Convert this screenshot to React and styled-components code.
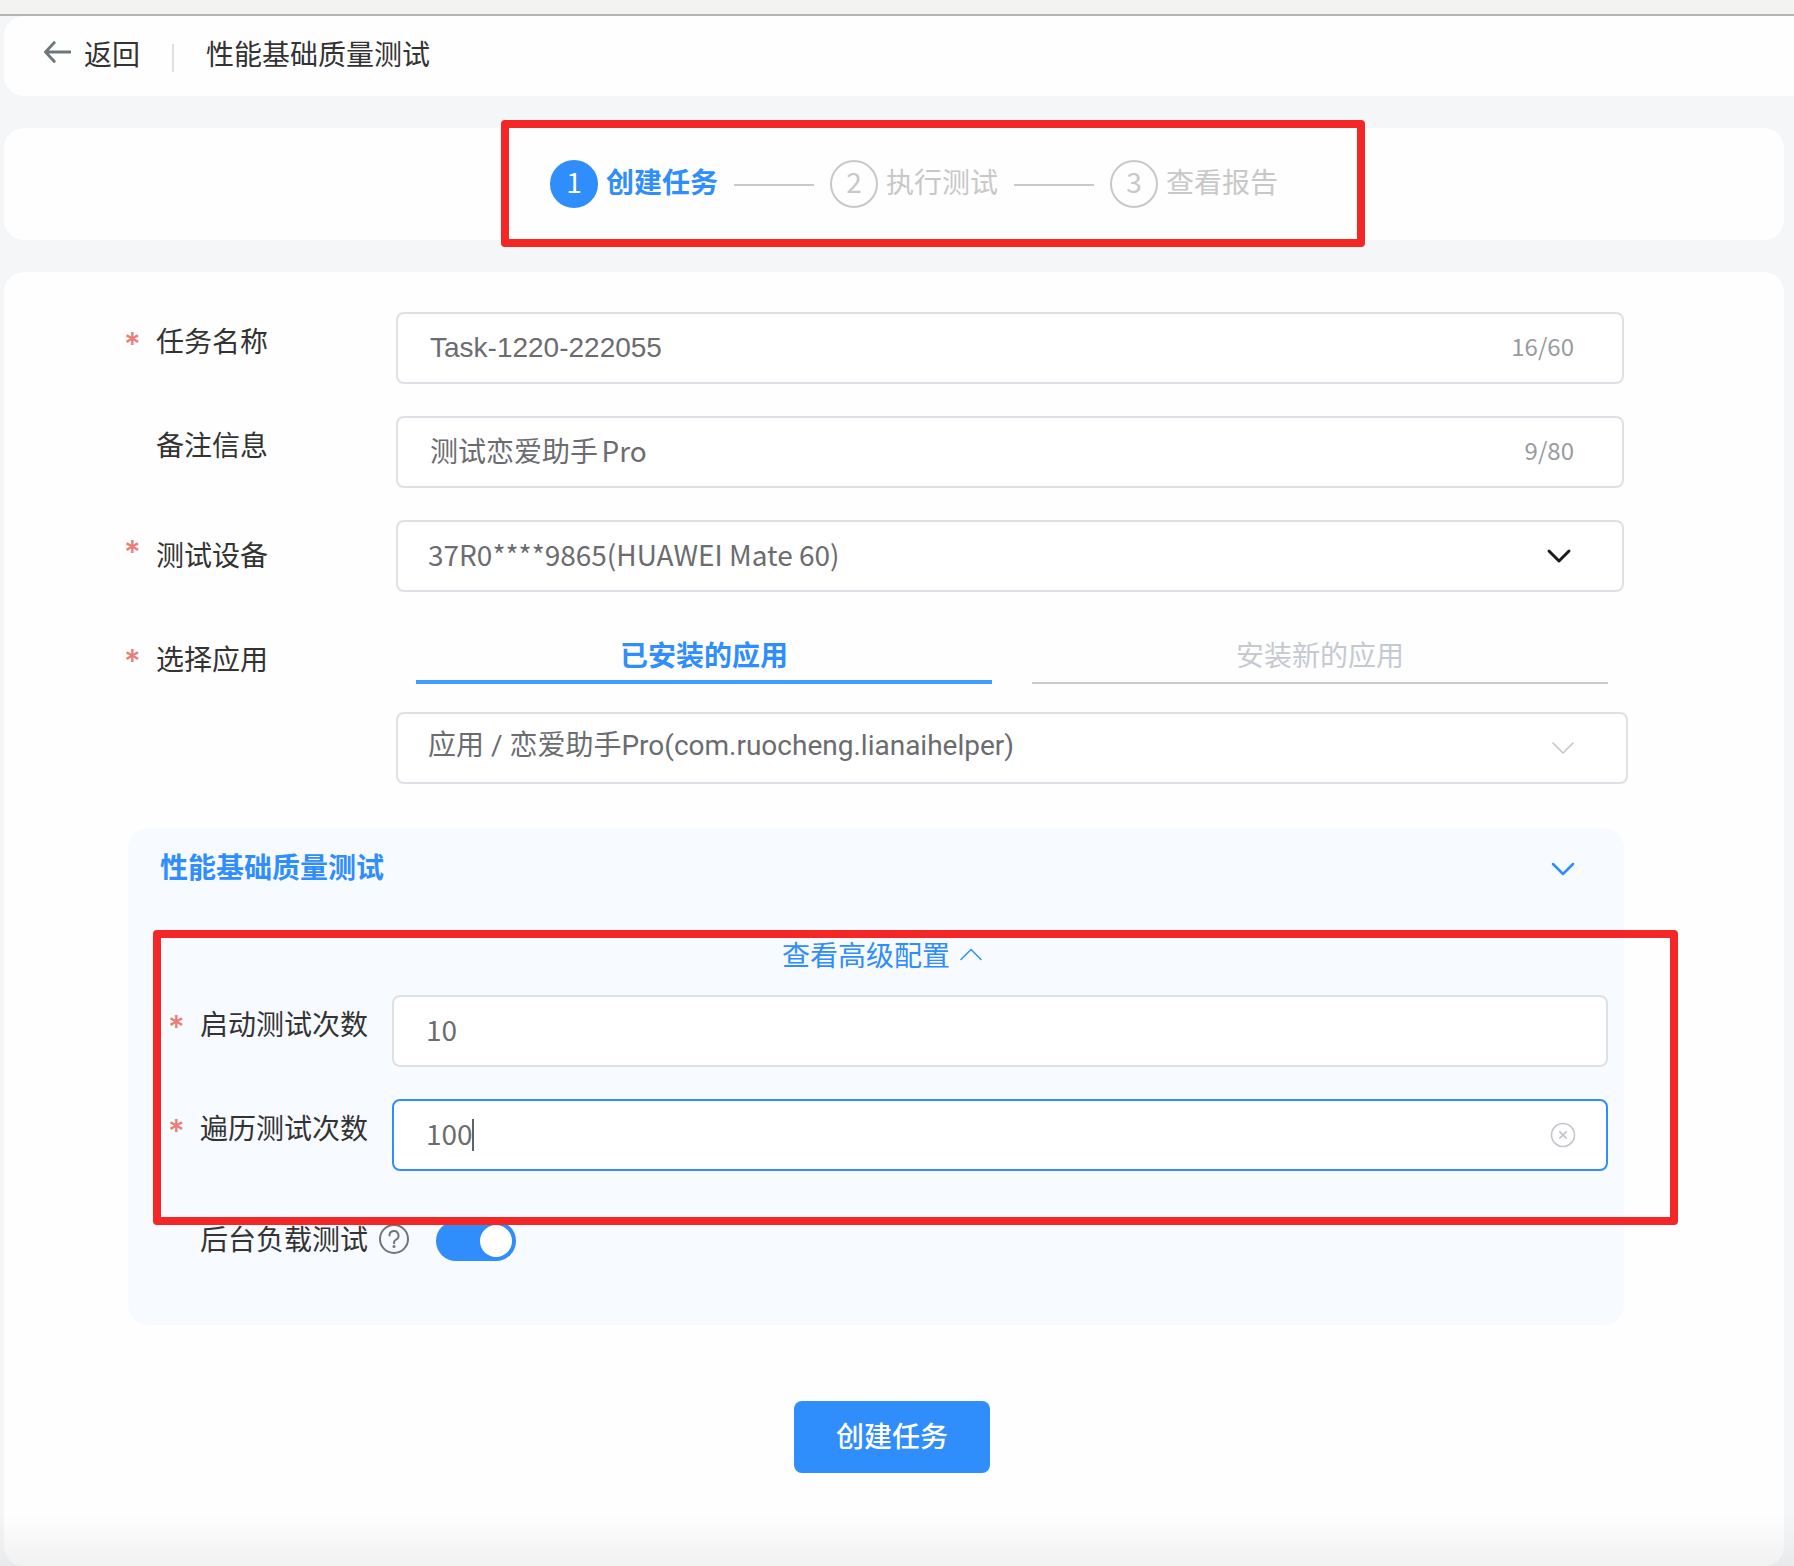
import React, { useState } from "react";
import styled, { createGlobalStyle, css } from "styled-components";

const BLUE = "#2f8dfc";
const SANS = '"Noto Sans CJK SC", "Noto Sans", sans-serif';

const GlobalStyle = createGlobalStyle`
  *, *::before, *::after { box-sizing: border-box; }
  body {
    margin: 0;
    background: #f4f6f8;
    color: #333;
    font-family: ${SANS};
    font-size: 28px;
    line-height: 40px;
    text-autospace: normal;
  }
  button, input, select { font: inherit; color: inherit; margin: 0; text-autospace: inherit; }
`;

const Page = styled.div`
  position: relative;
  display: flex;
  flex-direction: column;
  min-height: 100vh;
`;

const WindowEdge = styled.div`
  height: 16px;
  background: #f3f3f1;
  border-bottom: 2px solid #b4b4b2;
`;

const Header = styled.header`
  display: flex;
  align-items: center;
  height: 80px;
  margin-left: 4px;
  padding: 0 40px 6px;
  background: #fefefe;
  border-radius: 20px 0 0 20px;
`;

const BackLink = styled.a`
  display: flex;
  align-items: center;
  gap: 12px;
  color: inherit;
  text-decoration: none;
`;

const Divider = styled.span`
  width: 2px;
  height: 28px;
  margin: 10px 32px 0;
  background: #dfe0e6;
`;

const Title = styled.h1`
  margin: 0;
  font-size: 28px;
  font-weight: 400;
`;

const Card = styled.section`
  margin: 32px 10px 0 4px;
  background: #fefefe;
  border-radius: 20px;
`;

const StepsCard = styled(Card)`
  display: flex;
  justify-content: center;
  padding: 32px 0 32px 40px;
`;

const Steps = styled.ol`
  position: relative;
  display: flex;
  gap: 16px;
  margin: 0;
  padding: 0;
  list-style: none;
`;

const Step = styled.li`
  display: flex;
  gap: 8px;
  height: 48px;
  line-height: 42px;
  color: ${(p) => (p.$active ? BLUE : "#c8c8c8")};
  font-weight: ${(p) => (p.$active ? 700 : 400)};
`;

const StepNumber = styled.span`
  width: 48px;
  height: 48px;
  border: 2px solid ${(p) => (p.$active ? BLUE : "#c8c8c8")};
  border-radius: 50%;
  background: ${(p) => (p.$active ? BLUE : "transparent")};
  color: ${(p) => (p.$active ? "#fff" : "inherit")};
  font-weight: 400;
  line-height: 38px;
  text-align: center;
`;

const StepLine = styled.li`
  align-self: center;
  width: 80px;
  height: 2px;
  margin-top: 2px;
  background: #c8c8c8;
`;

const Highlight = styled.div`
  position: absolute;
  border: 8px solid #f42626;
  border-radius: 4px;
  pointer-events: none;
`;

const StepsHighlight = styled(Highlight)`
  inset: -40px -87px -39px -49px;
`;

const ConfigHighlight = styled(Highlight)`
  inset: -65px -70px -54px -15px;
`;

const FormCard = styled(Card)`
  flex: 1;
`;

const Form = styled.form`
  padding: 40px 0 92px;
`;

const Fields = styled.div`
  display: flex;
  flex-direction: column;
  gap: 32px;
  padding: 0 160px 0 120px;
`;

const Row = styled.div`
  display: grid;
  grid-template-columns: 32px ${(p) => (p.$nested ? "192px" : "240px")} minmax(0, 1fr);
`;

const Star = styled.span`
  padding-top: ${(p) => (p.$low ? "18px" : "13px")};
  color: #ea7d76;
  font-family: Inter, sans-serif;
  font-size: 32px;
  font-weight: 500;
`;

const Label = styled.label`
  grid-column: 2;
  padding-top: ${(p) => (p.$low ? "14px" : "8px")};
`;

const Control = styled.div`
  position: relative;
  display: flex;
  align-items: center;
  height: 72px;
  border: 2px solid ${(p) => (p.$focused ? BLUE : "#dfdfe6")};
  border-radius: 8px;
  background: #fff;
  color: #6b6c70;
`;

const fieldText = css`
  flex: 1;
  min-width: 0;
  height: 100%;
  border: 0;
  outline: 0;
  background: transparent;
`;

const TextInput = styled.input`
  ${fieldText}
  padding: 0 0 ${(p) => (p.$latin ? "0" : "4px")} 32px;
  font-family: ${(p) => (p.$latin ? '"Liberation Sans", Arial, sans-serif' : SANS)};
  caret-color: transparent;
`;

const SelectInput = styled.select`
  ${fieldText}
  padding: 0 80px 4px 30px;
  appearance: none;
  font-family: ${(p) => (p.$latin ? `Roboto, ${SANS}` : SANS)};
`;

const Counter = styled.span`
  padding: 0 48px 4px 0;
  color: #999b9f;
  font-size: 24px;
`;

const ControlIcon = styled.span`
  position: absolute;
  right: 50px;
  display: flex;
  pointer-events: none;
`;

const ClearButton = styled.button`
  display: flex;
  margin-right: 30px;
  padding: 0;
  border: 0;
  background: none;
`;

const Caret = styled.span`
  position: absolute;
  left: 78px;
  width: 2px;
  height: 32px;
  background: #606266;
`;

const AppPicker = styled.div`
  margin-right: -4px;
`;

const Tabs = styled.div`
  display: grid;
  grid-template-columns: 1fr 1fr;
  gap: 40px;
  padding: 0 20px 28px;
`;

const Tab = styled.button`
  height: 60px;
  padding: 0;
  border: 0;
  background: none;
  box-shadow: inset 0 ${(p) => (p.$active ? "-4px #409eff" : "-2px #c8ccd2")};
  color: ${(p) => (p.$active ? BLUE : "#c6c9d1")};
  font-weight: ${(p) => (p.$active ? 700 : 400)};
`;

const Panel = styled.section`
  margin: 12px 0 0 4px;
  padding: 18px 16px 64px 40px;
  border-radius: 20px;
  background: #f7faff;
`;

const PanelHeader = styled.button`
  display: flex;
  align-items: flex-end;
  justify-content: space-between;
  width: 100%;
  margin-bottom: 48px;
  padding: 0 32px 0 0;
  border: 0;
  background: none;
  color: ${BLUE};

  svg { margin-bottom: 4px; }
`;

const PanelTitle = styled.span`
  margin-left: -8px;
  font-weight: 700;
`;

const AdvancedToggle = styled.button`
  display: flex;
  align-items: center;
  gap: 8px;
  margin: 0 auto 21px;
  padding: 0 10px 0 0;
  border: 0;
  background: none;
  color: ${BLUE};
`;

const PanelFields = styled.div`
  position: relative;
  display: flex;
  flex-direction: column;
  gap: 32px;
`;

const SwitchRow = styled.div`
  display: flex;
  align-items: flex-start;
  margin-top: 50px;
  padding-left: 32px;
  line-height: 34px;
`;

const HelpButton = styled.button`
  display: flex;
  margin: 2px 26px 0 10px;
  padding: 0;
  border: 0;
  background: none;
  color: #737477;
`;

const Switch = styled.input`
  appearance: none;
  width: 80px;
  height: 40px;
  padding: 4px;
  border-radius: 20px;
  background: ${(p) => (p.checked ? BLUE : "#c8ccd2")};
  && { margin: 0; }
  &::before {
    content: "";
    display: block;
    width: 32px;
    height: 32px;
    margin-left: ${(p) => (p.checked ? "40px" : "0")};
    border-radius: 50%;
    background: #fff;
  }
`;

const Actions = styled.div`
  display: flex;
  justify-content: center;
  padding: 76px 4px 0 0;
`;

const SubmitButton = styled.button`
  width: 196px;
  height: 72px;
  padding: 0 0 4px;
  border: 0;
  border-radius: 8px;
  background: ${BLUE};
  color: #fff;
  font-weight: 500;
`;

const BottomFade = styled.div`
  position: absolute;
  inset: auto 0 0;
  height: 52px;
  background: linear-gradient(rgba(0, 0, 0, 0), rgba(0, 0, 0, 0.05));
  pointer-events: none;
`;

function Chevron({ up, color, stroke = 2 }) {
  return (
    <svg width="26" height="26" viewBox="0 0 26 26" fill="none" aria-hidden="true">
      <path
        d={up ? "M3 18.5 13 8.5l10 10" : "M3 8l10 10L23 8"}
        stroke={color}
        strokeWidth={stroke}
        strokeLinecap="round"
        strokeLinejoin="round"
      />
    </svg>
  );
}

function BackArrow() {
  return (
    <svg width="28" height="24" viewBox="0 0 28 24" fill="none" aria-hidden="true">
      <path d="M27 11H1.5M11 .8 1.5 11 11 21.2" stroke="#6c767b" strokeWidth="2.8" strokeLinejoin="round" />
    </svg>
  );
}

function ClearIcon() {
  return (
    <svg width="26" height="26" viewBox="0 0 26 26" fill="none" stroke="#c3c6cd" aria-hidden="true">
      <circle cx="13" cy="13" r="11.5" strokeWidth="1.6" />
      <path d="M9.3 9.3l7.4 7.4M16.7 9.3l-7.4 7.4" strokeWidth="1.8" />
    </svg>
  );
}

function HelpIcon() {
  return (
    <svg width="32" height="32" viewBox="0 0 32 32" fill="none" stroke="currentColor" aria-hidden="true">
      <circle cx="16" cy="16" r="14" strokeWidth="2" />
      <path d="M11.5 12.5a4.5 4.5 0 1 1 6.6 4c-1.4.8-2.1 1.500-2.1 3v.8" strokeWidth="2" strokeLinecap="round" />
      <circle cx="16" cy="23.5" r="1.5" fill="currentColor" stroke="none" />
    </svg>
  );
}

function Field({ id, label, required, nested, lowLabel, lowStar, children }) {
  return (
    <Row $nested={nested}>
      {required && <Star $low={lowStar}>*</Star>}
      <Label htmlFor={id} $low={lowLabel}>{label}</Label>
      {children}
    </Row>
  );
}

const STEPS = ["创建任务", "执行测试", "查看报告"];

export default function App() {
  const [name, setName] = useState("Task-1220-222055");
  const [note, setNote] = useState("测试恋爱助手Pro");
  const [launches, setLaunches] = useState("10");
  const [traversals, setTraversals] = useState("100");
  const [background, setBackground] = useState(true);

  return (
    <Page>
      <GlobalStyle />
      <WindowEdge />
      <Header>
        <BackLink href="#back"><BackArrow />返回</BackLink>
        <Divider />
        <Title>性能基础质量测试</Title>
      </Header>

      <StepsCard>
        <Steps>
          {STEPS.map((step, i) => (
            <React.Fragment key={step}>
              {i > 0 && <StepLine aria-hidden="true" />}
              <Step $active={i === 0}>
                <StepNumber $active={i === 0}>{i + 1}</StepNumber>
                {step}
              </Step>
            </React.Fragment>
          ))}
          <StepsHighlight as="li" />
        </Steps>
      </StepsCard>

      <FormCard>
        <Form onSubmit={(e) => e.preventDefault()}>
          <Fields>
            <Field id="name" label="任务名称" required>
              <Control>
                <TextInput id="name" $latin maxLength={60} value={name} onChange={(e) => setName(e.target.value)} />
                <Counter>{name.length}/60</Counter>
              </Control>
            </Field>
            <Field id="note" label="备注信息">
              <Control>
                <TextInput id="note" maxLength={80} value={note} onChange={(e) => setNote(e.target.value)} />
                <Counter>{note.length}/80</Counter>
              </Control>
            </Field>
            <Field id="device" label="测试设备" required lowLabel>
              <Control>
                <SelectInput id="device">
                  <option>37R0****9865(HUAWEI Mate 60)</option>
                </SelectInput>
                <ControlIcon><Chevron color="#1c1c1c" stroke={3} /></ControlIcon>
              </Control>
            </Field>
            <Field id="app" label="选择应用" required lowLabel lowStar>
              <AppPicker>
                <Tabs role="tablist">
                  <Tab type="button" role="tab" aria-selected="true" $active>已安装的应用</Tab>
                  <Tab type="button" role="tab" aria-selected="false">安装新的应用</Tab>
                </Tabs>
                <Control>
                  <SelectInput id="app" $latin>
                    <option>应用 / 恋爱助手Pro(com.ruocheng.lianaihelper)</option>
                  </SelectInput>
                  <ControlIcon><Chevron color="#c0c4cc" stroke={1.5} /></ControlIcon>
                </Control>
              </AppPicker>
            </Field>

            <Panel>
              <PanelHeader type="button">
                <PanelTitle>性能基础质量测试</PanelTitle>
                <Chevron color={BLUE} stroke={2.5} />
              </PanelHeader>
              <AdvancedToggle type="button">
                查看高级配置
                <Chevron up color={BLUE} stroke={1.5} />
              </AdvancedToggle>
              <PanelFields>
                <Field id="launches" label="启动测试次数" required nested>
                  <Control>
                    <TextInput id="launches" value={launches} onChange={(e) => setLaunches(e.target.value)} />
                  </Control>
                </Field>
                <Field id="traversals" label="遍历测试次数" required nested>
                  <Control $focused>
                    <TextInput id="traversals" value={traversals} onChange={(e) => setTraversals(e.target.value)} />
                    <Caret />
                    <ClearButton type="button" aria-label="清空" onClick={() => setTraversals("")}>
                      <ClearIcon />
                    </ClearButton>
                  </Control>
                </Field>
                <ConfigHighlight />
              </PanelFields>
              <SwitchRow>
                <label htmlFor="background">后台负载测试</label>
                <HelpButton type="button" aria-label="说明"><HelpIcon /></HelpButton>
                <Switch
                  id="background"
                  type="checkbox"
                  role="switch"
                  checked={background}
                  onChange={(e) => setBackground(e.target.checked)}
                />
              </SwitchRow>
            </Panel>
          </Fields>
          <Actions>
            <SubmitButton type="submit">创建任务</SubmitButton>
          </Actions>
        </Form>
      </FormCard>
      <BottomFade />
    </Page>
  );
}
